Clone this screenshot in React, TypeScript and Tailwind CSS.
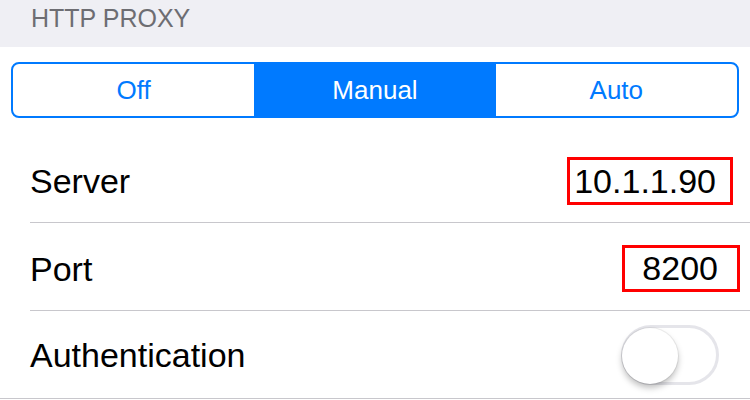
import React from "react";

export default function App() {
  const font = { fontFamily: '"Liberation Sans", Arial, Helvetica, sans-serif' };
  return (
    <div className="w-[750px] h-[400px] bg-white overflow-hidden" style={font}>
      <div className="h-[47px] bg-[#efeff4] pl-[31px] pt-[6px]">
        <div className="text-[25px] leading-[25px] text-[#6d6d72]">HTTP PROXY</div>
      </div>
      <div className="h-[88px] px-[11px] pt-[15px]">
        <div className="flex h-[56px] border-2 border-[#007aff] rounded-[8px] overflow-hidden text-[26px]">
          <div className="flex-1 flex items-center justify-center text-[#007aff]">Off</div>
          <div className="flex-1 flex items-center justify-center bg-[#007aff] text-white">Manual</div>
          <div className="flex-1 flex items-center justify-center text-[#007aff]">Auto</div>
        </div>
      </div>
      <div className="border-b border-[#c8c7cc]">
        <div className="pl-[30px]">
          <div className="h-[88px] pt-[4px] pr-[17px] flex items-center justify-between border-b border-[#c8c7cc] text-[34px] text-black">
            <span className="leading-[42px]">Server</span>
            <span className="border-[3px] border-[#ff0000] leading-[42px] pl-[4px] pr-[14px]">10.1.1.90</span>
          </div>
          <div className="h-[88px] pt-[4px] pr-[10px] flex items-center justify-between border-b border-[#c8c7cc] text-[34px] text-black">
            <span className="leading-[42px]">Port</span>
            <span className="border-[3px] border-[#ff0000] leading-[41px] pl-[17px] pr-[19px]">8200</span>
          </div>
          <div className="h-[87px] pr-[31px] flex items-center justify-between text-[34px] text-black">
            <span className="leading-[42px]">Authentication</span>
            <div className="relative w-[98px] h-[60px] rounded-full border-[3px] border-[#e5e5ea] bg-white">
              <div className="absolute left-[-2px] top-[0px] w-[56px] h-[56px] rounded-full bg-white shadow-[0_4px_6px_rgba(0,0,0,0.25),0_0_0_1px_rgba(0,0,0,0.06)]" />
            </div>
          </div>
        </div>
      </div>
    </div>
  );
}
